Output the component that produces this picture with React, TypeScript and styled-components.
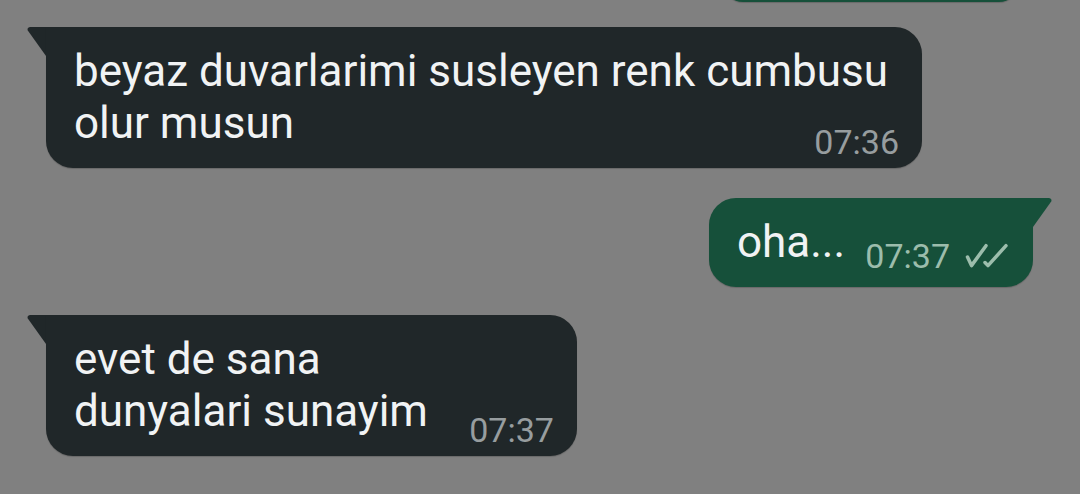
import React from "react";
import styled, { createGlobalStyle } from "styled-components";

const Global = createGlobalStyle`
  html, body { margin: 0; padding: 0; }
  body {
    background: #808080;
    font-family: Roboto, "Noto Sans", sans-serif;
    overflow: hidden;
  }
`;

const IN_BG = "#202729";
const OUT_BG = "#16503a";

const Screen = styled.div`
  width: 1080px;
  height: 494px;
  box-sizing: border-box;
  padding: 0 28px 0 27px;
  display: flex;
  flex-direction: column;
`;

const Row = styled.div<{ $out?: boolean; $gap: number }>`
  display: flex;
  align-items: flex-start;
  flex-direction: ${(p) => (p.$out ? "row-reverse" : "row")};
  margin-top: ${(p) => p.$gap}px;
`;

const PeekRow = styled.div`
  display: flex;
  justify-content: flex-end;
  height: 2px;
`;

const PeekBubble = styled.div`
  width: 296px;
  height: 40px;
  flex: none;
  margin: -38px 33px 0 0;
  background: ${OUT_BG};
  border-radius: 27px;
  box-shadow: 0 1px 1px rgba(0, 0, 0, 0.18);
`;

const TailSvg = styled.svg`
  flex: none;
  display: block;
  width: 19px;
  height: 29px;
`;

const Bubble = styled.div<{ $out?: boolean; $wrap?: boolean }>`
  display: grid;
  box-sizing: border-box;
  max-width: 876px;
  ${(p) => (p.$wrap ? "width: 876px;" : "")}
  padding: 18px ${(p) => (p.$out ? 25 : 23)}px 19px 28px;
  background: ${(p) => (p.$out ? OUT_BG : IN_BG)};
  border-radius: ${(p) => (p.$out ? "27px 0 27px 27px" : "0 27px 27px 27px")};
  box-shadow: 0 1px 1px rgba(0, 0, 0, 0.18);
`;

const Text = styled.div`
  grid-area: 1 / 1;
  font-size: 44px;
  line-height: 52px;
  color: #f1f3f4;
`;

const Spacer = styled.span<{ $w: number }>`
  display: inline-block;
  width: ${(p) => p.$w}px;
  height: 1px;
`;

const Meta = styled.div<{ $out?: boolean }>`
  grid-area: 1 / 1;
  justify-self: end;
  align-self: end;
  display: flex;
  align-items: baseline;
  gap: 13px;
  margin-bottom: ${(p) => (p.$out ? -5 : -10)}px;
`;

const Time = styled.span<{ $out?: boolean }>`
  font-size: 34px;
  line-height: 34px;
  color: ${(p) => (p.$out ? "#9cbdac" : "#979d9f")};
`;

const Ticks = styled.svg`
  display: block;
  width: 45px;
  height: 25px;
  margin-bottom: -1px;
`;

function Tail({ out }: { out?: boolean }) {
  return (
    <TailSvg viewBox="0 0 19 29" aria-hidden>
      {out ? (
        <path d="M16 0 H0 V29 L18.2 3.6 C19 2.4 18.2 0 16 0 Z" fill={OUT_BG} />
      ) : (
        <path d="M3 0 H19 V29 L0.8 3.6 C0 2.4 0.8 0 3 0 Z" fill={IN_BG} />
      )}
    </TailSvg>
  );
}

function DoubleTick() {
  return (
    <Ticks viewBox="0 0 45 25" aria-hidden>
      <g fill="none" stroke="#9cbdac" strokeWidth="3.5" strokeLinecap="round" strokeLinejoin="round">
        <path d="M4.5 14 L8.5 22.6 L23 2.7" />
        <path d="M22 19.5 L25 22.6 L43 2.7" />
      </g>
    </Ticks>
  );
}

type Msg = {
  out?: boolean;
  lines: string[];
  time: string;
  gap: number;
  wrap?: boolean;
};

const messages: Msg[] = [
  {
    lines: ["beyaz duvarlarimi susleyen renk cumbusu olur musun"],
    time: "07:36",
    gap: 25,
    wrap: true,
  },
  { out: true, lines: ["oha..."], time: "07:37", gap: 30 },
  { lines: ["evet de sana", "dunyalari sunayim"], time: "07:37", gap: 28 },
];

export default function App() {
  return (
    <>
      <Global />
      <Screen>
        <PeekRow>
          <PeekBubble />
        </PeekRow>
        {messages.map((m, i) => (
          <Row key={i} $out={m.out} $gap={m.gap}>
            <Tail out={m.out} />
            <Bubble $out={m.out} $wrap={m.wrap}>
              <Text>
                {m.lines.map((l, j) => (
                  <React.Fragment key={j}>
                    {j > 0 && <br />}
                    {l}
                  </React.Fragment>
                ))}
                <Spacer $w={m.out ? 163 : 126} />
              </Text>
              <Meta $out={m.out}>
                <Time $out={m.out}>{m.time}</Time>
                {m.out && <DoubleTick />}
              </Meta>
            </Bubble>
          </Row>
        ))}
      </Screen>
    </>
  );
}
